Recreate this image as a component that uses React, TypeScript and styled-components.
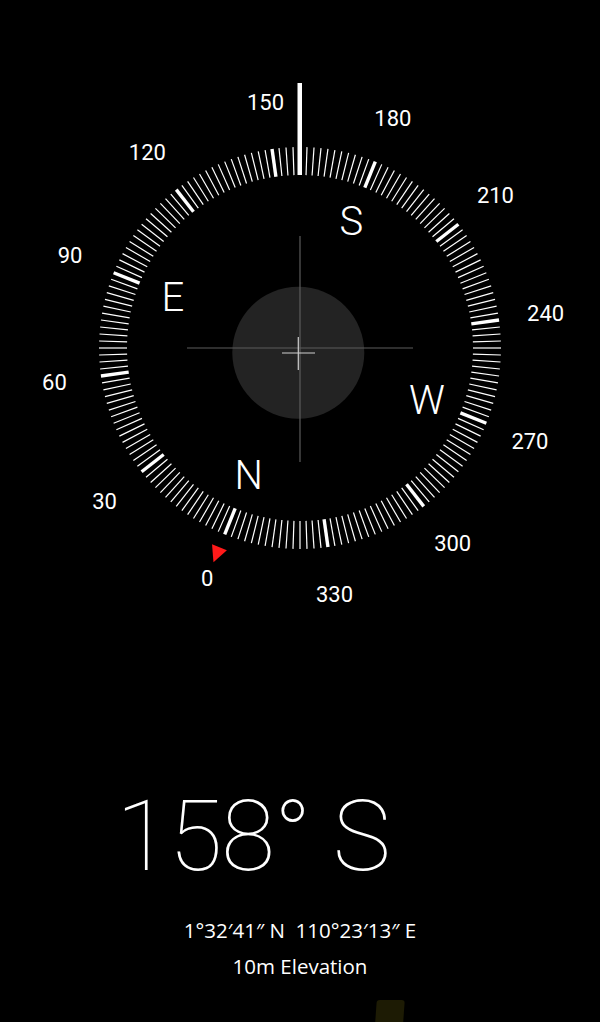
import styled, { createGlobalStyle } from "styled-components";

const GlobalStyle = createGlobalStyle`
  html, body {
    margin: 0;
    padding: 0;
    background: #000;
  }
`;

const HEADING = 158;
const CX = 300;
const CY = 348;
const TICK_OUTER = 201;
const TICK_INNER = 173;
const LABEL_RADIUS = 248;
const CARDINAL_RADIUS = 137;

const cardinals = [
  { name: "N", deg: 0 },
  { name: "E", deg: 90 },
  { name: "S", deg: 180 },
  { name: "W", deg: 270 },
];

// dial degree -> screen point (dial is turned so the heading sits at the top)
function polar(deg: number, r: number): [number, number] {
  const a = ((deg - HEADING) * Math.PI) / 180;
  return [CX + r * Math.sin(a), CY - r * Math.cos(a)];
}

function Compass(): JSX.Element {
  const ticks = Array.from({ length: 180 }, (_, i) => i * 2);
  const labels = Array.from({ length: 12 }, (_, i) => i * 30);

  return (
    <Dial viewBox="0 0 600 620" width={600} height={620}>
      <g transform={`rotate(${-HEADING} ${CX} ${CY})`}>
        {ticks.map((d) => (
          <line
            key={d}
            x1={CX}
            y1={CY - TICK_OUTER}
            x2={CX}
            y2={CY - TICK_INNER}
            stroke="#fff"
            strokeWidth={d % 30 === 0 ? 3.4 : 1.2}
            transform={`rotate(${d} ${CX} ${CY})`}
          />
        ))}
        <polygon
          points={`${CX - 8},${CY - 215} ${CX + 8},${CY - 215} ${CX},${CY - 231}`}
          fill="#ff1a1a"
        />
      </g>

      {labels.map((d) => {
        const [x, y] = polar(d, LABEL_RADIUS);
        return (
          <DegreeLabel key={d} x={x} y={y} dy="0.36em" textAnchor="middle">
            {d}
          </DegreeLabel>
        );
      })}

      {cardinals.map((c) => {
        const [x, y] = polar(c.deg, CARDINAL_RADIUS);
        return (
          <CardinalLabel key={c.name} x={x} y={y} dy="0.36em" textAnchor="middle">
            {c.name}
          </CardinalLabel>
        );
      })}

      <circle cx={298.3} cy={352.7} r={66} fill="#232323" />
      <line x1={187} y1={CY} x2={413} y2={CY} stroke="#5c5c5c" strokeWidth={1.2} />
      <line x1={CX} y1={236} x2={CX} y2={462} stroke="#5c5c5c" strokeWidth={1.2} />
      <line x1={282} y1={353} x2={315} y2={353} stroke="#cfcfcf" strokeWidth={1.2} />
      <line x1={298.3} y1={337} x2={298.3} y2={370} stroke="#cfcfcf" strokeWidth={1.2} />

      <rect x={297.5} y={83} width={4.5} height={92} fill="#fff" />
    </Dial>
  );
}

function App(): JSX.Element {
  return (
    <>
      <GlobalStyle />
      <Screen>
        <Compass />
        <Readout>
          <Heading>158° S</Heading>
          <InfoLine $gap={26}>1°32′41″ N&nbsp;&nbsp;110°23′13″ E</InfoLine>
          <InfoLine>10m Elevation</InfoLine>
        </Readout>
        <Glint />
      </Screen>
    </>
  );
}

export default App;

const Screen = styled.div`
  width: 600px;
  height: 1022px;
  background: #000;
  color: #fff;
  display: flex;
  flex-direction: column;
  overflow: hidden;
  font-family: Roboto, "Liberation Sans", sans-serif;
`;

const Dial = styled.svg`
  display: block;
  flex-shrink: 0;
`;

const DegreeLabel = styled.text`
  fill: #fff;
  font-family: Roboto, "Liberation Sans", sans-serif;
  font-size: 22px;
  font-weight: 400;
`;

const CardinalLabel = styled.text`
  fill: #fff;
  font-family: Roboto, "Liberation Sans", sans-serif;
  font-size: 40px;
  font-weight: 300;
`;

const Readout = styled.div`
  margin-top: 168px;
  display: flex;
  flex-direction: column;
`;

const Heading = styled.div`
  padding-left: 116px;
  font-size: 98px;
  font-weight: 100;
  line-height: 1;
  letter-spacing: -1px;
  white-space: nowrap;
`;

const InfoLine = styled.div<{ $gap?: number }>`
  margin-top: ${(p) => p.$gap ?? 0}px;
  text-align: center;
  font-family: "Open Sans", Roboto, sans-serif;
  font-size: 20.5px;
  font-weight: 400;
  line-height: 36px;
  white-space: nowrap;
`;

const Glint = styled.div`
  margin-top: auto;
  margin-left: 376px;
  width: 28px;
  height: 22px;
  border-radius: 3px 3px 0 0;
  background: #1d1b04;
  transform: skewX(-4deg);
`;
